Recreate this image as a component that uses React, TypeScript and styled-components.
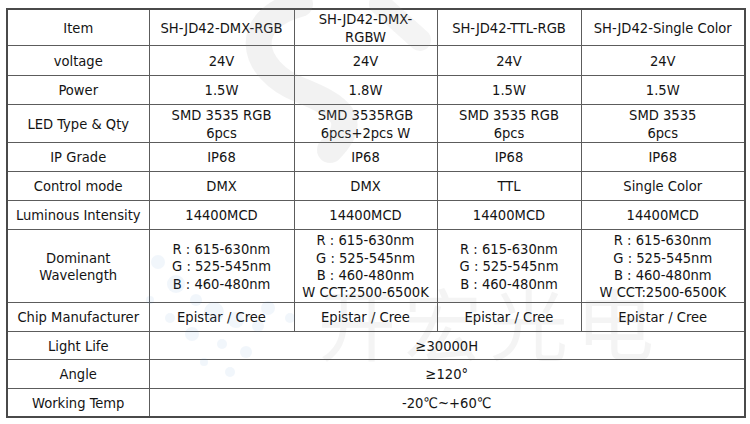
import styled, { createGlobalStyle } from "styled-components";

const GlobalStyle = createGlobalStyle`
  html, body {
    margin: 0;
    padding: 0;
    background: #ffffff;
  }
  body {
    font-family: "DejaVu Sans Condensed", "DejaVu Sans", sans-serif;
    color: #141414;
  }
`;

const Page = styled.div`
  position: relative;
  width: 750px;
  height: 424px;
  padding: 8px 0 0 6px;
  box-sizing: border-box;
  overflow: hidden;
`;

const Table = styled.table`
  border-collapse: collapse;
  table-layout: fixed;
  width: 738px;
  border: 2px solid #4a4a4a;
`;

const Col = styled.col<{ $w: number }>`
  width: ${(p) => p.$w}px;
`;

const Cell = styled.td<{ $h?: number }>`
  border: 1px solid #5c5c5c;
  text-align: center;
  vertical-align: middle;
  font-size: 14.6px;
  line-height: 17.4px;
  padding: 0 1px;
  height: ${(p) => (p.$h ? p.$h - 1 : 28)}px;
  white-space: nowrap;
`;

const Watermark = styled.div`
  position: absolute;
  inset: 0;
  pointer-events: none;
`;

const WaterText = styled.div`
  position: absolute;
  left: 318px;
  top: 282px;
  font-family: "Noto Sans CJK SC", sans-serif;
  font-size: 78px;
  letter-spacing: 8px;
  color: rgba(120, 120, 120, 0.08);
  line-height: 1;
`;

type Row = { label: string; h: number; values: string[] | string };

const widths = [142, 145, 143, 144, 164];

const rows: Row[] = [
  { label: "Item", h: 36, values: ["SH-JD42-DMX-RGB", "SH-JD42-DMX-\nRGBW", "SH-JD42-TTL-RGB", "SH-JD42-Single Color"] },
  { label: "voltage", h: 30, values: ["24V", "24V", "24V", "24V"] },
  { label: "Power", h: 29, values: ["1.5W", "1.8W", "1.5W", "1.5W"] },
  { label: "LED Type & Qty", h: 38, values: ["SMD 3535 RGB\n6pcs", "SMD 3535RGB\n6pcs+2pcs W", "SMD 3535 RGB\n6pcs", "SMD 3535\n6pcs"] },
  { label: "IP Grade", h: 29, values: ["IP68", "IP68", "IP68", "IP68"] },
  { label: "Control mode", h: 29, values: ["DMX", "DMX", "TTL", "Single Color"] },
  { label: "Luminous Intensity", h: 29, values: ["14400MCD", "14400MCD", "14400MCD", "14400MCD"] },
  {
    label: "Dominant\nWavelength",
    h: 73,
    values: [
      "R : 615-630nm\nG : 525-545nm\nB : 460-480nm",
      "R : 615-630nm\nG : 525-545nm\nB : 460-480nm\nW CCT:2500-6500K",
      "R : 615-630nm\nG : 525-545nm\nB : 460-480nm",
      "R : 615-630nm\nG : 525-545nm\nB : 460-480nm\nW CCT:2500-6500K",
    ],
  },
  { label: "Chip Manufacturer", h: 29, values: ["Epistar / Cree", "Epistar / Cree", "Epistar / Cree", "Epistar / Cree"] },
  { label: "Light Life", h: 28, values: "≥30000H" },
  { label: "Angle", h: 29, values: "≥120°" },
  { label: "Working Temp", h: 28, values: "-20℃~+60℃" },
];

function Lines({ text }: { text: string }) {
  const parts = text.split("\n");
  return (
    <>
      {parts.map((p, i) => (
        <span key={i}>
          {p}
          {i < parts.length - 1 && <br />}
        </span>
      ))}
    </>
  );
}

const dots = [
  [158, 262, 7], [176, 284, 9], [196, 300, 6], [214, 312, 10], [236, 320, 8],
  [258, 326, 6], [170, 318, 5], [192, 334, 7], [222, 344, 5], [246, 352, 6],
  [150, 300, 4], [268, 308, 7], [290, 318, 5], [204, 362, 4], [230, 372, 5],
];

export default function App() {
  return (
    <Page>
      <GlobalStyle />
      <Table>
        <colgroup>
          {widths.map((w, i) => (
            <Col key={i} $w={w} />
          ))}
        </colgroup>
        <tbody>
          {rows.map((r) => (
            <tr key={r.label}>
              <Cell $h={r.h}>
                <Lines text={r.label} />
              </Cell>
              {typeof r.values === "string" ? (
                <Cell $h={r.h} colSpan={4}>
                  {r.values}
                </Cell>
              ) : (
                r.values.map((v, i) => (
                  <Cell $h={r.h} key={i}>
                    <Lines text={v} />
                  </Cell>
                ))
              )}
            </tr>
          ))}
        </tbody>
      </Table>
      <Watermark>
        <svg width="750" height="424" viewBox="0 0 750 424">
          <path
            d="M300 4 C 240 20, 250 70, 300 90 C 340 106, 360 120, 330 150"
            fill="none"
            stroke="rgba(150,150,150,0.12)"
            strokeWidth="26"
            strokeLinecap="round"
          />
          <path
            d="M380 4 L 420 40"
            fill="none"
            stroke="rgba(150,150,150,0.1)"
            strokeWidth="22"
            strokeLinecap="round"
          />
          {dots.map(([x, y, r], i) => (
            <circle key={i} cx={x} cy={y} r={r} fill="rgba(80,140,210,0.08)" />
          ))}
        </svg>
        <WaterText>开宏光电</WaterText>
      </Watermark>
    </Page>
  );
}
